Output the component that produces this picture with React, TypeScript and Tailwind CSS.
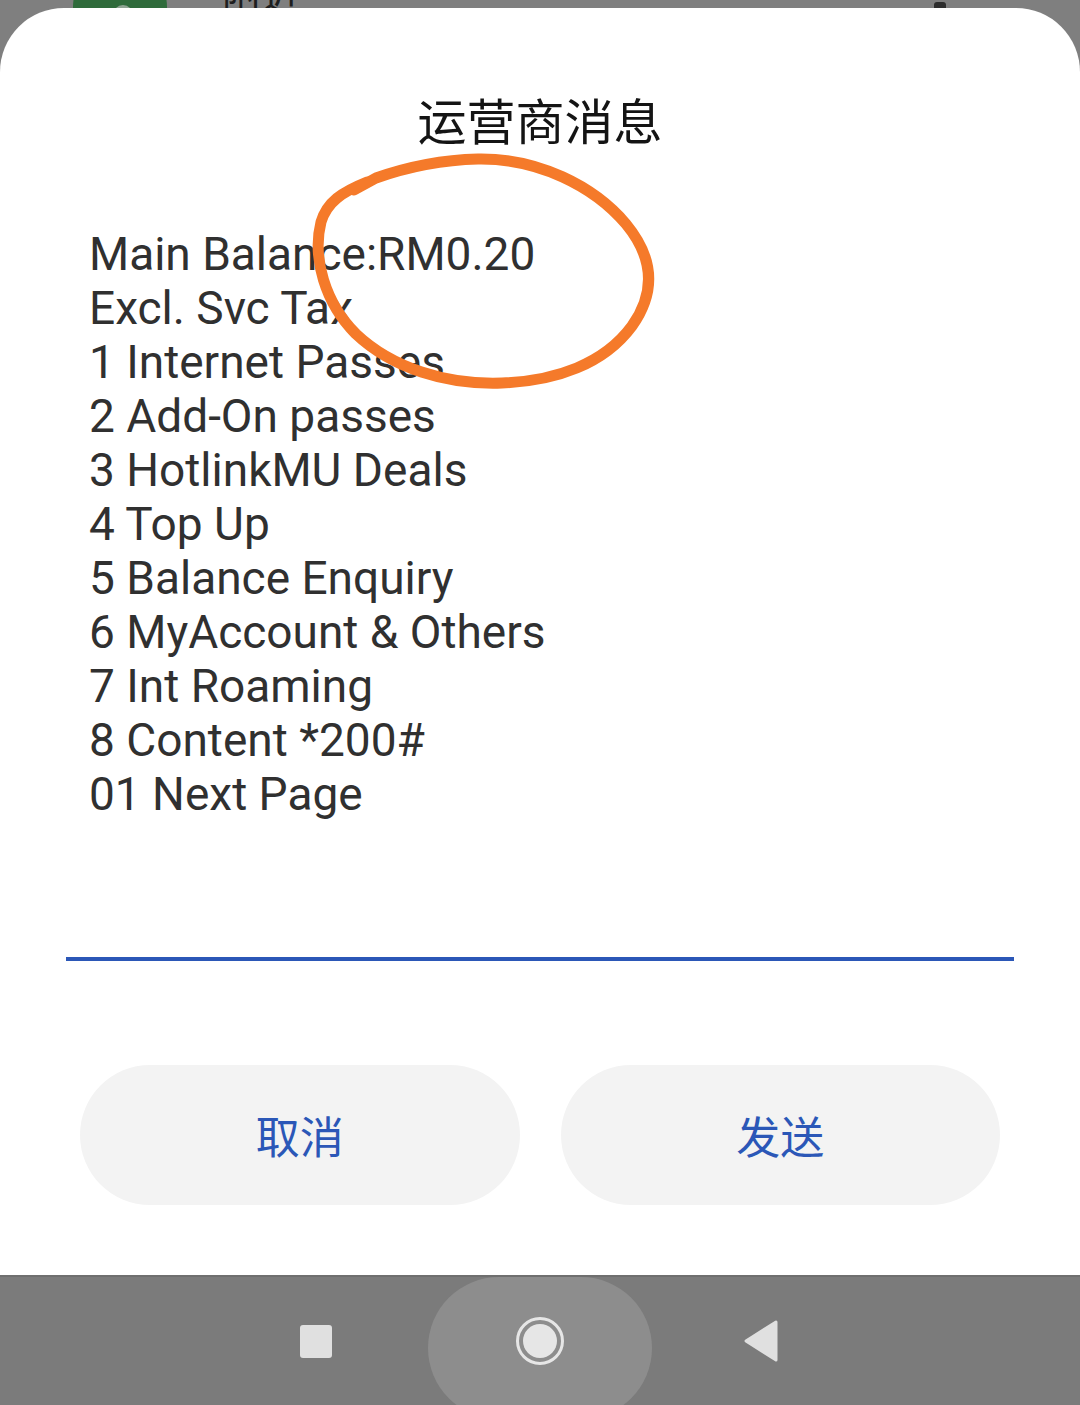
const bodyLines = [
  'Main Balance:RM0.20',
  'Excl. Svc Tax',
  '1 Internet Passes',
  '2 Add-On passes',
  '3 HotlinkMU Deals',
  '4 Top Up',
  '5 Balance Enquiry',
  '6 MyAccount & Others',
  '7 Int Roaming',
  '8 Content *200#',
  '01 Next Page',
];

const cjk = "font-['Noto_Sans_CJK_SC','Noto_Sans',sans-serif]";

function NavBar() {
  return (
    <div className="flex h-[130px] shrink-0 justify-center overflow-hidden border-t-2 border-[#6f6f6f] bg-[#7b7b7b]">
      <div className="flex w-[224px] items-center justify-center">
        <div className="h-[33px] w-[32px] rounded-[3px] bg-[#e0e0e0]" />
      </div>
      <div className="relative flex w-[224px] items-center justify-center">
        {/* pressed-state pill behind the home button */}
        <div className="absolute inset-x-0 top-0 h-[142px] rounded-[100px] bg-[#8d8d8d]" />
        <svg className="relative" width="50" height="50" viewBox="0 0 50 50">
          <circle cx="25" cy="25" r="22.5" fill="none" stroke="#e6e6e6" strokeWidth="3" />
          <circle cx="25" cy="25" r="17" fill="#e6e6e6" />
        </svg>
      </div>
      <div className="flex w-[224px] items-center justify-center pr-[6px]">
        <svg width="34" height="42" viewBox="0 0 34 42">
          <polygon points="32,2 32,40 2,21" fill="#e0e0e0" stroke="#e0e0e0" strokeWidth="3" strokeLinejoin="round" />
        </svg>
      </div>
    </div>
  );
}

export default function App() {
  return (
    <div className="relative flex h-[1405px] w-[1080px] flex-col overflow-hidden bg-[#7f7f7f]">
      {/* dimmed screen peeking out above the sheet */}
      <div className="absolute left-[73px] top-[-40px] h-[94px] w-[94px] rounded-full bg-[#2f6b3b]">
        <div className="absolute left-[40px] top-[45px] h-[20px] w-[20px] rounded-full bg-[#8fa493]" />
      </div>
      <span className={`absolute left-[222px] top-[-28px] text-[40px] leading-none text-[#1e1e1e] ${cjk}`}>附近</span>
      <div className="absolute left-[934px] top-[2px] h-[10px] w-[12px] rounded-[3px] bg-[#2e2e2e]" />

      <div className="relative z-10 mt-[8px] flex flex-1 flex-col rounded-t-[64px] bg-white pb-[70px] pt-[79px]">
        <h1 className={`h-[64px] text-center text-[49px] leading-[64px] text-[#141414] ${cjk}`}>运营商消息</h1>

        <div className="mt-[76px] pl-[89px] font-['Roboto','Liberation_Sans',sans-serif] text-[46px] leading-[54px] text-[#303030]">
          {bodyLines.map((line) => (
            <div key={line} className="h-[54px] whitespace-pre">{line}</div>
          ))}
        </div>

        <div className="mx-[66px] mt-[136px] h-[4px] bg-[#2b57b7]" />

        <div className="mt-[104px] flex gap-[41px] px-[80px]">
          <button className={`flex h-[140px] flex-1 items-center justify-center rounded-full bg-[#f3f3f3] text-[44px] text-[#2b57b7] ${cjk}`}>
            取消
          </button>
          <button className={`flex h-[140px] flex-1 items-center justify-center rounded-full bg-[#f3f3f3] text-[44px] text-[#2b57b7] ${cjk}`}>
            发送
          </button>
        </div>
      </div>

      <NavBar />

      {/* hand-drawn annotation */}
      <svg className="pointer-events-none absolute left-0 top-0 z-20" width="1080" height="1405" viewBox="0 0 1080 1405">
        <path
          d="M354 190 L376 178 C410 166 440 160 478 159 C538 158 594 186 626 224 C654 258 656 292 632 326 C604 364 556 381 502 383 C446 385 392 368 356 334 C325 303 312 258 321 222 C327 202 342 192 367 182"
          fill="none"
          stroke="#f57a2a"
          strokeWidth="11"
          strokeLinecap="round"
          strokeLinejoin="round"
        />
      </svg>
    </div>
  );
}
